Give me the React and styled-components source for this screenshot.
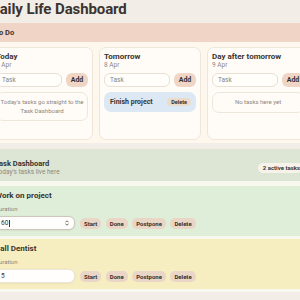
import React from 'react';
import styled, { createGlobalStyle } from 'styled-components';

const GlobalStyle = createGlobalStyle`
  * { box-sizing: border-box; }
  html, body {
    margin: 0;
    padding: 0;
    background: #f2ede6;
  }
  body {
    font-family: Roboto, "Liberation Sans", Arial, sans-serif;
    color: #3a3430;
    overflow: hidden;
  }
`;

const Page = styled.div`
  display: flex;
  justify-content: center;
  width: 300px;
  height: 300px;
  overflow: hidden;
`;

const Shell = styled.main`
  flex: 0 0 340px;
  width: 340px;
  display: flex;
  flex-direction: column;
`;

const Title = styled.h1`
  margin: 0 0 4px 10px;
  font-size: 15px;
  line-height: 19px;
  font-weight: 700;
  letter-spacing: -0.1px;
  color: #3b3431;
`;

const Section = styled.section`
  display: flex;
  flex-direction: column;
  & + & {
    margin-top: 6px;
  }
`;

const SectionHeader = styled.header`
  display: flex;
  align-items: center;
  justify-content: space-between;
  min-height: 19px;
  padding: ${(p) => (p.$tall ? '10px 15px 5px' : '0 15px')};
  background: ${(p) => p.$tone};
`;

const HeaderTitle = styled.h2`
  margin: 0;
  font-size: 7.5px;
  line-height: 9px;
  font-weight: 700;
`;

const HeaderSub = styled.p`
  margin: 0;
  font-size: 6.5px;
  line-height: 8px;
  color: #8d867f;
`;

const CountPill = styled.span`
  height: 10px;
  padding: 0 5px;
  border-radius: 6px;
  background: #f7f3eb;
  font-size: 6px;
  line-height: 10px;
  font-weight: 700;
`;

const SectionBody = styled.div`
  background: ${(p) => p.$tone};
  padding: ${(p) => p.$pad};
  display: flex;
  flex-direction: column;
  gap: 3px;
`;

const Columns = styled.div`
  display: grid;
  grid-template-columns: repeat(3, minmax(0, 1fr));
  gap: 6px;
`;

const DayCard = styled.div`
  display: flex;
  flex-direction: column;
  min-width: 0;
  min-height: 93px;
  padding: 4px;
  border: 1px solid #efe6da;
  border-radius: 7px;
  background: #fffcf7;
`;

const DayTitle = styled.h3`
  margin: 0;
  font-size: 8px;
  line-height: 9px;
  font-weight: 700;
`;

const DayDate = styled.div`
  font-size: 6.5px;
  line-height: 8px;
  color: #8d867f;
  margin-bottom: 4px;
`;

const AddRow = styled.div`
  display: flex;
  gap: 4px;
  margin-bottom: 5px;
`;

const TextInput = styled.input`
  flex: 1;
  width: 0;
  min-width: 0;
  height: 14px;
  padding: 0 5px;
  border: 1px solid #e9e0d4;
  border-radius: 6px;
  background: #fffefb;
  font-family: inherit;
  font-size: 6.5px;
  outline: none;
  &::placeholder {
    color: #8a837c;
  }
`;

const AddButton = styled.button`
  flex: 0 0 22px;
  height: 14px;
  padding: 0;
  border: none;
  border-radius: 6px;
  background: #efd5c5;
  font-family: inherit;
  font-size: 7px;
  font-weight: 700;
  color: #3a302a;
`;

const EmptyBox = styled.div`
  padding: 5px 3px;
  border: 1px solid #efe6da;
  border-radius: 7px;
  background: #fffcf7;
  text-align: center;
  font-size: 6px;
  line-height: 8.5px;
  color: #8d867f;
`;

const TodoItem = styled.div`
  display: flex;
  align-items: center;
  justify-content: space-between;
  height: 20px;
  padding: 0 5px 0 6px;
  border-radius: 7px;
  background: #dce8f4;
  font-size: 7px;
  font-weight: 700;
`;

const SmallPill = styled.button`
  height: 8px;
  padding: 0 4px;
  border: none;
  border-radius: 4px;
  background: #ecdaca;
  font-family: inherit;
  font-size: 5.5px;
  line-height: 8px;
  font-weight: 700;
  color: #3a302a;
`;

const TaskCard = styled.div`
  padding: 5px 4px 6px;
  border-radius: 6px;
  background: ${(p) => p.$tone};
`;

const TaskTitle = styled.h3`
  margin: 0 0 4px;
  font-size: 8px;
  line-height: 10px;
  font-weight: 700;
`;

const FieldLabel = styled.div`
  font-size: 6px;
  line-height: 8px;
  color: #8d867f;
  margin-bottom: 3px;
`;

const TaskRow = styled.div`
  display: flex;
  align-items: center;
  gap: 4.5px;
`;

const DurationField = styled.div`
  display: flex;
  align-items: center;
  width: 80px;
  height: 14px;
  margin-right: 0.5px;
  padding: 0 5px;
  border: 1px solid ${(p) => (p.$focused ? '#cfc6bb' : '#ece5da')};
  border-radius: 6px;
  background: #fffefc;
  box-shadow: 0 0.5px 1.5px rgba(80, 60, 40, 0.12);
  font-size: 6.5px;
`;

const Caret = styled.span`
  width: 0.6px;
  height: 7px;
  margin-left: 0.5px;
  background: #3a3430;
`;

const Spacer = styled.span`
  flex: 1;
`;

const ActionButton = styled.button`
  height: 11px;
  padding: 0 4px;
  border: none;
  border-radius: 5px;
  background: #e9d6c6;
  font-family: inherit;
  font-size: 6px;
  font-weight: 700;
  color: #3a302a;
`;

const Spinner = () => (
  <svg width="4" height="6" viewBox="0 0 4 6">
    <path d="M0.5 2.3 L2 0.8 L3.5 2.3 M0.5 3.7 L2 5.2 L3.5 3.7" fill="none" stroke="#4a423c" strokeWidth="0.8" />
  </svg>
);

const days = [
  { name: 'Today', date: '7 Apr', empty: "Today's tasks go straight to the Task Dashboard" },
  { name: 'Tomorrow', date: '8 Apr', items: ['Finish project'] },
  { name: 'Day after tomorrow', date: '9 Apr', empty: 'No tasks here yet' },
];

const tasks = [
  { title: 'Work on project', duration: '60', tone: '#dfeed8', focused: true },
  { title: 'Call Dentist', duration: '5', tone: '#f6eec0' },
];

const App = () => {
  return (
    <Page>
      <GlobalStyle />
      <Shell>
        <Title>Daily Life Dashboard</Title>
        <Section>
          <SectionHeader $tone="#f0d4c5">
            <HeaderTitle>To Do</HeaderTitle>
          </SectionHeader>
          <SectionBody $tone="#fdf7ee" $pad="5px 11px 3px">
            <Columns>
              {days.map((day) => (
                <DayCard key={day.name}>
                  <DayTitle>{day.name}</DayTitle>
                  <DayDate>{day.date}</DayDate>
                  <AddRow>
                    <TextInput placeholder="Task" />
                    <AddButton>Add</AddButton>
                  </AddRow>
                  {day.items ? (
                    day.items.map((item) => (
                      <TodoItem key={item}>
                        {item}
                        <SmallPill>Delete</SmallPill>
                      </TodoItem>
                    ))
                  ) : (
                    <EmptyBox>{day.empty}</EmptyBox>
                  )}
                </DayCard>
              ))}
            </Columns>
          </SectionBody>
        </Section>
        <Section>
          <SectionHeader $tone="#dde6d4" $tall>
            <div>
              <HeaderTitle>Task Dashboard</HeaderTitle>
              <HeaderSub>Today's tasks live here</HeaderSub>
            </div>
            <CountPill>2 active tasks</CountPill>
          </SectionHeader>
          <SectionBody $tone="#f9f8ef" $pad="5px 11px 3px">
            {tasks.map((task) => (
              <TaskCard key={task.title} $tone={task.tone}>
                <TaskTitle>{task.title}</TaskTitle>
                <FieldLabel>Duration</FieldLabel>
                <TaskRow>
                  <DurationField $focused={task.focused}>
                    {task.duration}
                    {task.focused && <Caret />}
                    <Spacer />
                    {task.focused && <Spinner />}
                  </DurationField>
                  <ActionButton>Start</ActionButton>
                  <ActionButton>Done</ActionButton>
                  <ActionButton>Postpone</ActionButton>
                  <ActionButton>Delete</ActionButton>
                </TaskRow>
              </TaskCard>
            ))}
          </SectionBody>
        </Section>
      </Shell>
    </Page>
  );
};

export default App;
